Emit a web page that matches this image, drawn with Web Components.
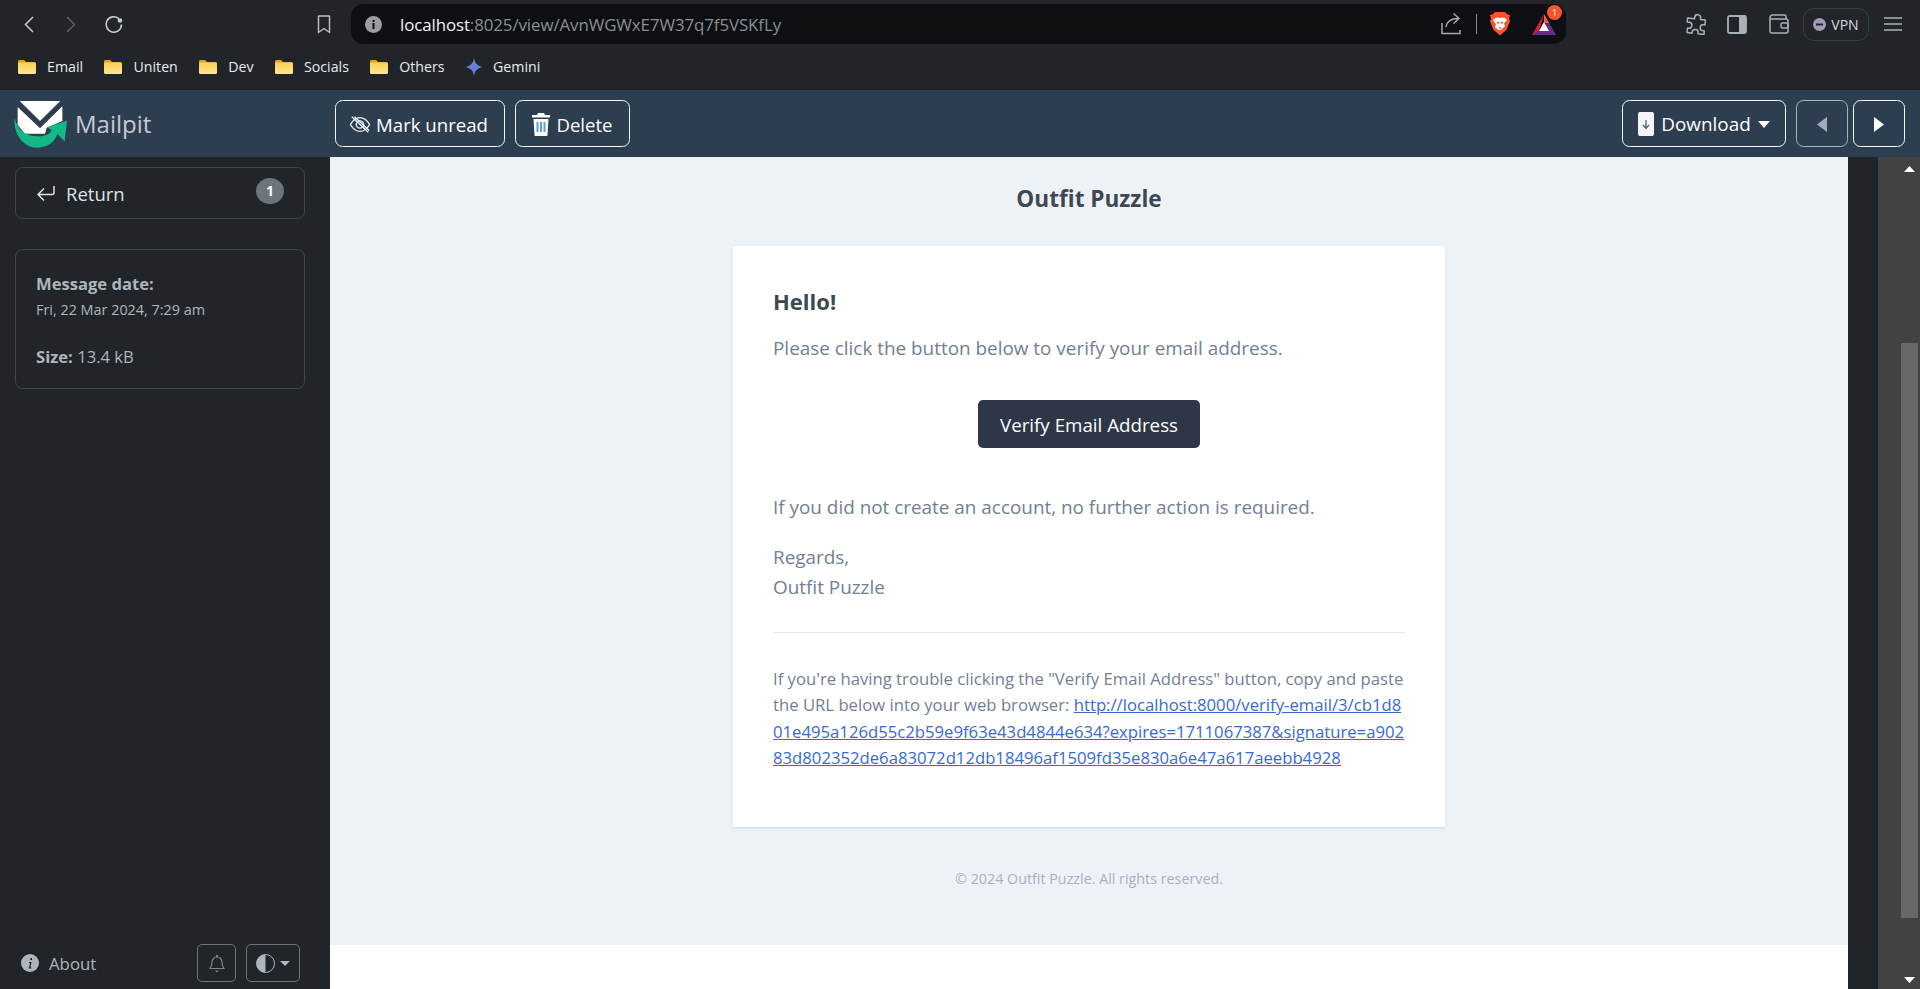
<!DOCTYPE html>
<html lang="en">
<head>
<meta charset="utf-8">
<title>Mailpit - Outfit Puzzle</title>
<style>
  html, body { margin: 0; height: 100%; overflow: hidden; background: #212529; }
  body { font-family: "Open Sans", "Noto Sans", sans-serif; display: flex; flex-direction: column; height: 989px; }
</style>
</head>
<body>
<browser-chrome></browser-chrome>
<app-header></app-header>
<app-body></app-body>

<script>
const FONT = `"Open Sans", "Noto Sans", sans-serif`

class BookmarkItem extends HTMLElement {
  constructor() {
    super()
    this.attachShadow({ mode: "open" })
    const gemini = this.hasAttribute("gemini")
    const icon = gemini
      ? `<svg width="18" height="18" viewBox="0 0 18 18"><defs><linearGradient id="g" x1="0" y1="1" x2="1" y2="0"><stop offset="0" stop-color="#8a63c9"/><stop offset="1" stop-color="#3f9be8"/></linearGradient></defs><path fill="url(#g)" d="M9 0C9.6 5 13 8.4 18 9C13 9.6 9.6 13 9 18C8.4 13 5 9.6 0 9C5 8.4 8.4 5 9 0Z"/></svg>`
      : `<svg width="20" height="16" viewBox="0 0 20 16"><defs><linearGradient id="f" x1="0" y1="0" x2="0" y2="1"><stop offset="0" stop-color="#fbd24e"/><stop offset="1" stop-color="#fde59a"/></linearGradient></defs><path fill="#e0a526" d="M1 2.5A1.5 1.5 0 0 1 2.5 1H7l2 2h8.5A1.5 1.5 0 0 1 19 4.500V6H1Z"/><rect x="1" y="3.500" width="18" height="11.500" rx="1.500" fill="url(#f)"/></svg>`
    this.shadowRoot.innerHTML = `
      <style>
        :host { display: flex; align-items: center; gap: 10px; font-size: 14.200px; color: #e8eaed; }
        svg { display: block; }
      </style>
      ${icon}<slot></slot>`
  }
}

class BrowserChrome extends HTMLElement {
  constructor() {
    super()
    this.attachShadow({ mode: "open" })
    this.shadowRoot.innerHTML = `
      <style>
        :host { display: block; height: 90px; flex: none; background: #212529; font-family: ${FONT}; }
        svg { display: block; flex: none; }
        .tools { height: 45px; display: flex; align-items: center; padding: 3px 0 0 24px; box-sizing: border-box; }
        .nav { display: flex; align-items: center; }
        .address { margin-left: 20px; width: 1215px; height: 40px; background: #0e0f13; border-radius: 13px; display: flex; align-items: center; padding: 0 10px 0 14px; box-sizing: border-box; position: relative; }
        .url { margin-left: 18px; font-size: 16.900px; color: #8b8e94; letter-spacing: -.1px; white-space: nowrap; flex: 1; }
        .url b { font-weight: 400; color: #f1f3f4; }
        .sep { width: 1px; height: 20px; background: #8a8d92; margin: 0 13px 0 14px; }
        .badge { position: absolute; right: 4px; top: 1px; width: 15px; height: 15px; border-radius: 50%; background: #fb542b; color: #fff; font-size: 9px; line-height: 15px; text-align: center; }
        .right { display: flex; align-items: center; flex: 1; }
        .vpn { display: flex; align-items: center; gap: 5px; width: 66px; height: 33px; box-sizing: border-box; justify-content: center; border: 1px solid #383e44; border-radius: 11px; font-size: 14px; color: #d6d9dd; }
        .marks { height: 45px; margin-top: -1px; display: flex; align-items: center; gap: 20.400px; padding: 0 0 0 17px; }
      </style>
      <div class="tools">
        <div class="nav">
          <svg width="10" height="17" viewBox="0 0 10 17"><path d="M9 1L1.500 8.500L9 16" fill="none" stroke="#c6cacf" stroke-width="1.500"/></svg>
          <svg style="margin-left:32px" width="10" height="17" viewBox="0 0 10 17"><path d="M1 1L8.500 8.500L1 16" fill="none" stroke="#5c6065" stroke-width="1.500"/></svg>
          <svg style="margin-left:28px" width="20" height="19" viewBox="0 0 20 19"><path d="M17.500 9.500A7.700 7.700 0 1 1 14.800 3.600" fill="none" stroke="#c6cacf" stroke-width="1.600"/><circle cx="16" cy="5.500" r="2.300" fill="#c6cacf"/></svg>
          <svg style="margin-left:193px" width="14" height="19" viewBox="0 0 14 19"><path d="M1.500 1h11v16.500L7 13.500L1.500 17.500Z" fill="none" stroke="#b9bdc2" stroke-width="1.500" stroke-linejoin="round"/></svg>
        </div>
        <div class="address">
          <svg width="17" height="17" viewBox="0 0 17 17"><circle cx="8.500" cy="8.500" r="8.500" fill="#9a9da3"/><rect x="7.500" y="7" width="2" height="6" fill="#0e0f13"/><rect x="7.500" y="4" width="2" height="2" fill="#0e0f13"/></svg>
          <div class="url"><b>localhost</b>:8025/view/AvnWGWxE7W37q7f5VSKfLy</div>
          <svg width="21" height="24" viewBox="0 0 21 24"><path d="M1 11v10.500h18V18M5 15c1-6 5-8.500 12-8.500M12.500 1.500L18 6.500L12.500 11.500" fill="none" stroke="#a5a8ad" stroke-width="1.500"/></svg>
          <div class="sep"></div>
          <svg width="20" height="24" viewBox="0 0 20 27" preserveAspectRatio="none"><path fill="#fb542b" d="M5 0h10l2 2.500 3 1-1 4 1 3-3.500 9.500-6.500 6.500-6.500-6.500L0 10.500l1-3-1-4 3-1Z"/><path fill="#fff" d="M5 7l3-1 2 1 2-1 3 1 2 2-3 4 1 3-3 3-2 1.500L8 20l-3-3 1-3-3-5Z"/><path fill="#fb542b" d="M7 11h2l.5 2H7ZM11 11h2v2h-2.500ZM8.500 17h3L10 19Z"/></svg>
          <svg style="margin-left:22px" width="24" height="21" viewBox="0 0 24 21"><path fill="#d0213a" d="M12 0L0 21h6Z"/><path fill="#662d91" d="M12 0l12 21H0l5-4h10Z"/><path fill="#ff5a2c" d="M12 0l5 9h-5Z"/><path fill="#fff" d="M12 8l5 9H7Z"/></svg>
          <div class="badge">1</div>
        </div>
        <div class="right">
          <svg style="margin-left:120px" width="21" height="22" viewBox="0 0 21 22"><path d="M8 4.500a3 3 0 0 1 6 0V6h5v5h-1.500a3 3 0 0 0 0 6H19v3.500H13v-1a3 3 0 0 0-6 0v1H2V16h1a3 3 0 0 0 0-6H1V6h7Z" fill="none" stroke="#a8b1b8" stroke-width="1.500" stroke-linejoin="round" transform="rotate(6 10 11)"/></svg>
          <svg style="margin-left:20px" width="20" height="19" viewBox="0 0 20 19"><rect x="1" y="1" width="18" height="17" rx="1.500" fill="none" stroke="#a8b1b8" stroke-width="1.800"/><rect x="12" y="1" width="7" height="17" fill="#a8b1b8"/></svg>
          <svg style="margin-left:22px" width="20" height="20" viewBox="0 0 20 20"><path d="M17 5V2.500A1.500 1.500 0 0 0 15.500 1H3.500A2.500 2.500 0 0 0 1 3.500V17a2 2 0 0 0 2 2h14a2 2 0 0 0 2-2V7a2 2 0 0 0-2-2H1.500" fill="none" stroke="#a8b1b8" stroke-width="1.500"/><rect x="12" y="9" width="7" height="5" rx="1.500" fill="none" stroke="#a8b1b8" stroke-width="1.500"/></svg>
          <div class="vpn" style="margin-left:14px">
            <svg width="13" height="13" viewBox="0 0 13 13"><circle cx="6.500" cy="6.500" r="6.500" fill="#9d9db6"/><rect x="3" y="5.500" width="7" height="2" fill="#212529"/></svg>VPN
          </div>
          <svg style="margin-left:15px" width="18" height="14" viewBox="0 0 18 14"><path d="M0 1h18M0 7h18M0 13h18" stroke="#a8b1b8" stroke-width="1.500"/></svg>
        </div>
      </div>
      <div class="marks">
        <bookmark-item>Email</bookmark-item>
        <bookmark-item>Uniten</bookmark-item>
        <bookmark-item>Dev</bookmark-item>
        <bookmark-item>Socials</bookmark-item>
        <bookmark-item>Others</bookmark-item>
        <bookmark-item gemini>Gemini</bookmark-item>
      </div>`
  }
}

class HeaderButton extends HTMLElement {
  constructor() {
    super()
    this.attachShadow({ mode: "open" })
    this.shadowRoot.innerHTML = `
      <style>
        :host { display: inline-flex; align-items: center; justify-content: center; gap: 6px; box-sizing: border-box; height: 47px; border: 1px solid #f4f6f8; border-radius: 7.500px; color: #fff; font-size: 18.600px; white-space: nowrap; padding-top: 1px; }
        :host([dim]) { border-color: #a9b3bd; }
      </style>
      <slot></slot>`
  }
}

class AppHeader extends HTMLElement {
  constructor() {
    super()
    this.attachShadow({ mode: "open" })
    this.shadowRoot.innerHTML = `
      <style>
        :host { display: flex; align-items: center; height: 67px; flex: none; background: #2c3e50; font-family: ${FONT}; padding: 0 15px 0 15px; box-sizing: border-box; }
        svg { display: block; flex: none; overflow: visible; }
        .brand { display: flex; align-items: center; width: 320px; flex: none; gap: 10px; color: #c4cad1; font-size: 24px; }
        .left { display: flex; gap: 10px; }
        .right { margin-left: auto; display: flex; gap: 5px; }
        .dl { margin-right: 5px; }
      </style>
      <div class="brand">
        <svg width="50" height="46" viewBox="0 0 150 138">
          <path fill="#fff" d="M14 0H136L75 60Z"/>
          <path fill="#fff" d="M8 18L75 82L142 16V60L95 80L90 98H30L8 72Z"/>
          <path fill="#12b886" d="M-1 51C-6 105 30 140 66 140C98 140 118 124 127 100L149 121L156 59L96 79L110 88C104 100 90 107 66 106C35 105 8 90 -1 51Z"/>
        </svg>
        <span>Mailpit</span>
      </div>
      <div class="left">
        <header-button style="width:170px;gap:5px;padding-right:3px">
          <svg width="22" height="19" viewBox="0 0 24 20"><g fill="none" stroke="#e9edf1" stroke-width="1.500"><path d="M1.500 10C5 4 8 2.500 12 2.500S19 4 22.500 10C19 16 16 17.500 12 17.500S5 16 1.500 10Z"/><circle cx="12" cy="10" r="4"/><path d="M3 1.500L21 18.500M6 1.500L22 16.500"/></g></svg>
          Mark unread
        </header-button>
        <header-button style="width:115px">
          <svg width="18" height="23" viewBox="0 0 18 23"><path fill="#fff" d="M6 0h6l1 2h5v2.500H0V2h5Z"/><path fill="#fff" d="M1.500 6h15l-1 16a1 1 0 0 1-1 1h-11a1 1 0 0 1-1-1Z"/><path d="M5.500 9v10M9 9v10M12.500 9v10" stroke="#5f9fce" stroke-width="2"/></svg>
          Delete
        </header-button>
      </div>
      <div class="right">
        <header-button class="dl" style="width:164px;gap:7px">
          <svg width="16" height="24" viewBox="0 0 16 24"><rect width="16" height="24" rx="2" fill="#f4f6f8"/><path d="M8 8v8M5 13l3 3.500L11 13" fill="none" stroke="#55657a" stroke-width="1.300"/></svg>
          <span style="font-size:18.900px">Download</span>
          <svg width="12" height="7" viewBox="0 0 12 7"><path d="M0 0h12L6 7Z" fill="#fff"/></svg>
        </header-button>
        <header-button dim style="width:52px">
          <svg width="10" height="15" viewBox="0 0 10 15"><path d="M10 0V15L0 7.500Z" fill="#a4adb6"/></svg>
        </header-button>
        <header-button style="width:52px">
          <svg width="10" height="15" viewBox="0 0 10 15"><path d="M0 0V15L10 7.500Z" fill="#fff"/></svg>
        </header-button>
      </div>`
  }
}

class AppSidebar extends HTMLElement {
  constructor() {
    super()
    this.attachShadow({ mode: "open" })
    this.shadowRoot.innerHTML = `
      <style>
        :host { display: flex; flex-direction: column; width: 330px; flex: none; box-sizing: border-box; padding: 10px 25px 7px 15px; background: #212529; font-family: ${FONT}; color: #adb5bd; }
        svg { display: block; flex: none; }
        .return { display: flex; align-items: center; height: 52px; box-sizing: border-box; border: 1px solid #41464b; border-radius: 7.500px; padding: 1px 20px 0 21px; color: #dee2e6; font-size: 18.500px; gap: 11px; }
        .pill { margin-left: auto; margin-top: -6px; width: 28px; height: 26px; border-radius: 50%; background: #6c757d; color: #fff; font-size: 14px; font-weight: 700; text-align: center; line-height: 26px; }
        .info { margin-top: 30px; height: 140px; box-sizing: border-box; border: 1px solid #41464b; border-radius: 7.500px; padding: 22px 20px; font-size: 16.600px; }
        .info b { display: block; font-weight: 700; line-height: 24px; }
        .date { font-size: 14.400px; line-height: 24px; margin-top: 2px; }
        .size { margin-top: 23px; line-height: 24px; }
        .size b { display: inline; }
        .foot { margin-top: auto; display: flex; align-items: center; padding-right: 5px; }
        .about { display: flex; align-items: center; gap: 10px; margin-left: 6px; font-size: 16.800px; }
        .mini { height: 38px; display: flex; align-items: center; justify-content: center; gap: 5px; box-sizing: border-box; border: 1px solid #6c757d; border-radius: 5px; }
      </style>
      <div class="return">
        <svg width="18" height="16" viewBox="0 0 18 16"><path d="M17 0v6.500a2 2 0 0 1-2 2H1.500M7 2.500L1 8.500L7 14.500" fill="none" stroke="#dee2e6" stroke-width="1.500"/></svg>
        Return
        <div class="pill">1</div>
      </div>
      <div class="info">
        <b>Message date:</b>
        <div class="date">Fri, 22 Mar 2024, 7:29 am</div>
        <div class="size"><b>Size:</b> 13.4 kB</div>
      </div>
      <div class="foot">
        <div class="about">
          <svg width="18" height="18" viewBox="0 0 18 18"><circle cx="9" cy="9" r="9" fill="#adb5bd"/><path d="M8 8h2.500L9.500 13.500h1V14.500H7.500V13.500h.7L9 9H8ZM9.300 4h1.700v2H9.300Z" fill="#212529"/></svg>
          About
        </div>
        <div class="mini" style="width:39px;margin-left:auto">
          <svg width="16" height="19" viewBox="0 0 16 19"><path d="M3 8a5 5 0 0 1 10 0c0 4 1 5 2 6.500H1C2 13 3 12 3 8Z" fill="none" stroke="#7c848c" stroke-width="1.200"/><path d="M6 16.500h4L8 18.500Z" fill="#7c848c"/><rect x="7" y="1" width="2" height="2" fill="#7c848c"/></svg>
        </div>
        <div class="mini" style="width:54px;margin-left:10px">
          <svg width="19" height="19" viewBox="0 0 19 19"><circle cx="9.500" cy="9.500" r="9" fill="none" stroke="#adb5bd"/><path d="M9.500 .5a9 9 0 0 0 0 18Z" fill="#adb5bd"/></svg>
          <svg width="10" height="5" viewBox="0 0 10 5"><path d="M0 0h10L5 5Z" fill="#adb5bd"/></svg>
        </div>
      </div>`
  }
}

class MailCard extends HTMLElement {
  constructor() {
    super()
    this.attachShadow({ mode: "open" })
    this.shadowRoot.innerHTML = `
      <style>
        :host { display: block; width: 712px; height: 581px; box-sizing: border-box; padding: 39px 40px 40px; background: #fff; border-radius: 2.500px; box-shadow: 0 2px 1px rgba(0,0,150,.03), 0 2px 6px rgba(0,0,150,.05); }
        h1 { margin: 0; font-size: 22px; line-height: 32px; font-weight: 700; color: #3d4852; }
        p { margin: 0; font-size: 18.900px; line-height: 30px; color: #718096; }
        .button-row { display: flex; justify-content: center; margin-top: 37px; }
        .button { width: 222px; height: 48px; display: flex; align-items: center; justify-content: center; background: #2d3748; color: #fff; border-radius: 5px; font-size: 18.750px; }
        hr { border: 0; border-top: 1px solid #e8e5ef; margin: 30px 0 0; width: 632px; }
        .sub { font-size: 16.700px; line-height: 26.250px; margin-top: 33px; white-space: nowrap; }
        a { color: #3869d4; }
      </style>
      <h1>Hello!</h1>
      <p style="margin-top:16px">Please click the button below to verify your email address.</p>
      <div class="button-row"><div class="button">Verify Email Address</div></div>
      <p style="margin-top:44px">If you did not create an account, no further action is required.</p>
      <p style="margin-top:20px">Regards,<br>Outfit Puzzle</p>
      <hr>
      <p class="sub">If you're having trouble clicking the "Verify Email Address" button, copy and paste<br>the URL below into your web browser: <a href="#">http://localhost:8000/verify-email/3/cb1d8<br>01e495a126d55c2b59e9f63e43d4844e634?expires=1711067387&amp;signature=a902<br>83d802352de6a83072d12db18496af1509fd35e830a6e47a617aeebb4928</a></p>`
  }
}

class EmailView extends HTMLElement {
  constructor() {
    super()
    this.attachShadow({ mode: "open" })
    this.shadowRoot.innerHTML = `
      <style>
        :host { display: flex; flex-direction: column; flex: 1; min-width: 0; background: #fff; font-family: ${FONT}; }
        .page { height: 788px; background: #edf2f7; display: flex; flex-direction: column; align-items: center; }
        .title { font-size: 22.600px; font-weight: 700; color: #3d4852; margin-top: 27px; line-height: 30px; height: 62px; }
        .copy { margin-top: 40px; font-size: 14.300px; line-height: 24px; color: #b0adc5; }
      </style>
      <div class="page">
        <div class="title">Outfit Puzzle</div>
        <mail-card></mail-card>
        <div class="copy">© 2024 Outfit Puzzle. All rights reserved.</div>
      </div>`
  }
}

class ScrollRail extends HTMLElement {
  constructor() {
    super()
    this.attachShadow({ mode: "open" })
    this.shadowRoot.innerHTML = `
      <style>
        :host { display: flex; flex-direction: column; align-items: flex-end; width: 42px; flex: none; margin-left: 30px; background: #424242; padding: 0 2px; box-sizing: border-box; }
        svg { display: block; }
        .arrow { width: 17px; height: 6px; display: flex; justify-content: center; }
        .thumb { width: 17px; height: 575px; margin-top: 171px; background: #686868; }
      </style>
      <div class="arrow" style="margin-top:9px"><svg width="11" height="6" viewBox="0 0 11 6"><path d="M0 6L5.500 0L11 6Z" fill="#fff"/></svg></div>
      <div class="thumb"></div>
      <div class="arrow" style="margin-top:59px"><svg width="11" height="6" viewBox="0 0 11 6"><path d="M0 0L5.500 6L11 0Z" fill="#fff"/></svg></div>`
  }
}

class AppBody extends HTMLElement {
  constructor() {
    super()
    this.attachShadow({ mode: "open" })
    this.shadowRoot.innerHTML = `
      <style>
        :host { display: flex; flex: 1; min-height: 0; background: #212529; }
      </style>
      <app-sidebar></app-sidebar>
      <email-view></email-view>
      <scroll-rail></scroll-rail>`
  }
}

customElements.define("bookmark-item", BookmarkItem)
customElements.define("browser-chrome", BrowserChrome)
customElements.define("header-button", HeaderButton)
customElements.define("app-header", AppHeader)
customElements.define("app-sidebar", AppSidebar)
customElements.define("mail-card", MailCard)
customElements.define("email-view", EmailView)
customElements.define("scroll-rail", ScrollRail)
customElements.define("app-body", AppBody)
</script>
</body>
</html>
